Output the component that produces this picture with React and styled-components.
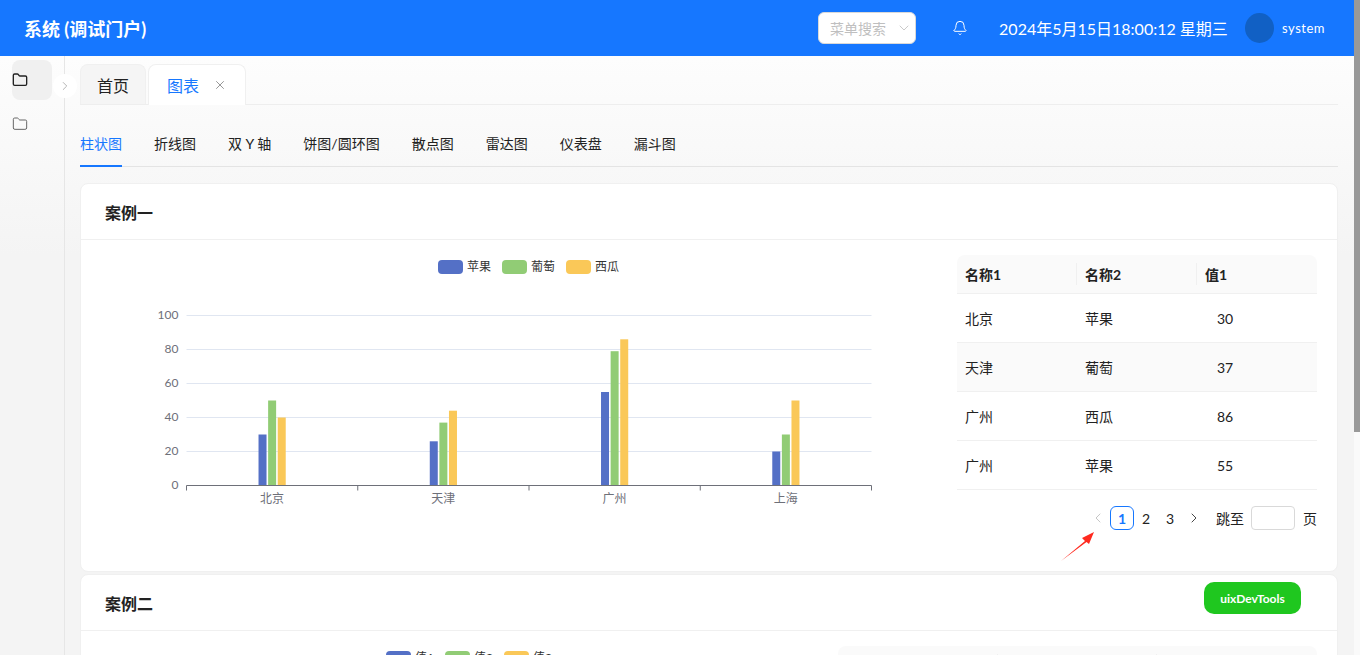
import React from "react";
import styled, { createGlobalStyle } from "styled-components";
import { Bell, ChevronDown, ChevronLeft, ChevronRight, Folder, X } from "lucide-react";

const Global = createGlobalStyle`
  html, body { margin: 0; padding: 0; height: 100%; overflow: hidden; }
  body { font-family: Lato, "Noto Sans CJK SC", sans-serif; color: #222; font-size: 14px; }
  * { box-sizing: border-box; }
`;

const Page = styled.div`
  position: relative;
  width: 1360px;
  height: 655px;
  overflow: hidden;
  padding-right: 6px;
  background: #fafafa;
`;
const TopBar = styled.header`
  height: 56px;
  background: #1677ff;
  color: #fff;
  display: flex;
  align-items: center;
  padding: 0 29px 0 24px;
`;
const Brand = styled.div`
  font-size: 18px;
  font-weight: 700;
  flex: 1;
`;
const SearchBox = styled.div`
  width: 98px;
  height: 32px;
  border-radius: 6px;
  background: #fff;
  border: 1px solid #d9d9d9;
  display: flex;
  align-items: center;
  justify-content: space-between;
  padding: 0 3px 0 11px;
  color: #bfbfbf;
  font-size: 14px;
`;
const BellWrap = styled.div`
  margin-left: 36px;
  width: 16px;
  height: 16px;
  display: flex;
`;
const Clock = styled.div`
  margin-left: 31px;
  font-size: 16px;
  width: 224px;
  white-space: nowrap;
`;
const Avatar = styled.div`
  margin-left: 22px;
  width: 29px;
  height: 30px;
  border-radius: 50%;
  background: #1160c4;
`;
const UserName = styled.div`
  margin-left: 8px;
  font-size: 13px;
  letter-spacing: 0.5px;
`;
const Body = styled.div`
  display: flex;
  height: 599px;
  background: linear-gradient(#fdfdfd 0, #f4f4f4 200px);
`;
const Side = styled.aside`
  position: relative;
  width: 65px;
  flex: none;
  border-right: 1px solid #e6e6e6;
  padding: 4px 12px;
  display: flex;
  flex-direction: column;
  gap: 4px;
`;
const SideItem = styled.div`
  width: 40px;
  height: 40px;
  border-radius: 8px;
  display: flex;
  align-items: center;
  padding-left: 0;
  background: ${(p) => (p.$active ? "#f0f0f0" : "transparent")};
  color: ${(p) => (p.$active ? "#222" : "#666")};
`;
const Collapse = styled.div`
  position: absolute;
  left: 53px;
  top: 18px;
  width: 24px;
  height: 24px;
  border-radius: 50%;
  background: #fff;
  color: #aaa;
  display: flex;
  align-items: center;
  justify-content: center;
`;
const Main = styled.main`
  flex: 1;
  min-width: 0;
  overflow: hidden;
  padding: 8px 16px 0 15px;
`;
const TabBar = styled.div`
  height: 41px;
  display: flex;
  gap: 2px;
  border-bottom: 1px solid #eeeeee;
`;
const PageTab = styled.div`
  height: ${(p) => (p.$active ? "41px" : "40px")};
  padding: 0 ${(p) => (p.$active ? "18px" : "16px")};
  display: flex;
  align-items: center;
  gap: 14px;
  font-size: 16px;
  border: 1px solid #f0f0f0;
  border-bottom: 0;
  border-radius: 8px 8px 0 0;
  background: ${(p) => (p.$active ? "#fff" : "#f5f5f5")};
  color: ${(p) => (p.$active ? "#1677ff" : "#222")};
  svg { color: #888; }
`;
const SubTabs = styled.nav`
  margin-top: 19px;
  height: 43px;
  display: flex;
  gap: 32px;
  border-bottom: 1px solid #e4e4e4;
`;
const SubTab = styled.div`
  height: 43px;
  padding-top: 10px;
  line-height: 20px;
  font-size: 14px;
  white-space: nowrap;
  color: ${(p) => (p.$active ? "#1677ff" : "#222")};
  border-bottom: 2px solid ${(p) => (p.$active ? "#1677ff" : "transparent")};
`;
const Card = styled.section`
  margin-top: ${(p) => p.$mt}px;
  background: #fff;
  border: 1px solid #f0f0f0;
  border-radius: 8px;
`;
const CardHead = styled.div`
  height: 56px;
  padding: 0 24px;
  display: flex;
  align-items: center;
  font-size: 16px;
  font-weight: 600;
  border-bottom: 1px solid #f0f0f0;
`;
const CardBody = styled.div`
  display: flex;
  gap: 20px;
  padding: 15px 20px 41px;
`;
const ChartPane = styled.div`
  flex: 1;
  min-width: 0;
`;
const TablePane = styled.div`
  width: ${(p) => p.$w}px;
  flex: none;
`;
const Table = styled.table`
  width: 100%;
  border-collapse: separate;
  border-spacing: 0;
  table-layout: fixed;
  font-size: 14px;
`;
const Th = styled.th`
  position: relative;
  height: 39px;
  padding: 0 8px;
  text-align: left;
  font-weight: 700;
  background: #fafafa;
  border-bottom: 1px solid #f0f0f0;
  &:first-child { border-top-left-radius: 8px; }
  &:last-child { border-top-right-radius: 8px; }
  &:not(:last-child)::after {
    content: "";
    position: absolute;
    right: 0;
    top: 8px;
    height: 22px;
    width: 1px;
    background: #f0f0f0;
  }
`;
const Tr = styled.tr`
  background: ${(p) => (p.$odd ? "#fafafa" : "#fff")};
`;
const Td = styled.td`
  height: 49px;
  padding: 0 8px;
  border-bottom: 1px solid #f0f0f0;
`;
const NumTd = styled(Td)`
  padding-left: 20px;
`;
const Pager = styled.div`
  margin-top: 16px;
  display: flex;
  justify-content: flex-end;
  align-items: center;
  height: 24px;
  font-size: 14px;
`;
const PageBtn = styled.div`
  width: 24px;
  height: 24px;
  border-radius: 6px;
  display: flex;
  align-items: center;
  justify-content: center;
  border: 1px solid ${(p) => (p.$active ? "#1677ff" : "transparent")};
  color: ${(p) => (p.$active ? "#1677ff" : p.$dim ? "#bbb" : "#222")};
  font-weight: ${(p) => (p.$active ? 700 : 400)};
`;
const JumpLabel = styled.span`
  margin-left: 10px;
`;
const JumpInput = styled.div`
  width: 44px;
  height: 24px;
  margin: 0 8px 0 7px;
  border: 1px solid #d9d9d9;
  border-radius: 4px;
  background: #fff;
`;
const Scrollbar = styled.div`
  position: absolute;
  right: 0;
  top: 0;
  width: 6px;
  height: 432px;
  background: #999;
`;
const DevTools = styled.div`
  position: absolute;
  left: 1204px;
  top: 582px;
  width: 97px;
  height: 32px;
  border-radius: 10px;
  background: #1fc71f;
  color: #fff;
  font-size: 12px;
  font-weight: 700;
  display: flex;
  align-items: center;
  justify-content: center;
`;
const Arrow = styled.svg`
  position: absolute;
  left: 1060px;
  top: 530px;
`;

const COLORS = ["#5470c6", "#91cc75", "#fac858"];

function Chart({ width, height, legend, legendX, legendStep, cats, series, gridLeft, gridRight }) {
  const top = 60.5;
  const unit = 1.7;
  const base = top + 170;
  const gridW = gridRight - gridLeft;
  const band = gridW / cats.length;
  return (
    <svg width={width} height={height} style={{ display: "block" }} fontFamily='Lato, "Noto Sans CJK SC", sans-serif'>
      {legend.map((name, i) => (
        <g key={name}>
          <rect x={legendX + i * legendStep} y={5} width={25} height={14} rx={4} fill={COLORS[i]} />
          <text x={legendX + i * legendStep + 29} y={16} fontSize={12} fill="#333">{name}</text>
        </g>
      ))}
      {[0, 20, 40, 60, 80, 100].map((v) => (
        <g key={v}>
          {v > 0 && <line x1={gridLeft} x2={gridRight} y1={base - v * unit} y2={base - v * unit} stroke="#e0e6f1" />}
          <text x={gridLeft - 8} y={base - v * unit + 3.5} textAnchor="end" fontSize={12} fill="#6e7079">{v}</text>
        </g>
      ))}
      {cats.map((c, i) => (
        <g key={c}>
          <text x={gridLeft + band * (i + 0.5)} y={base + 17} textAnchor="middle" fontSize={12} fill="#6e7079">{c}</text>
          {series.map((s, j) => (
            <rect
              key={j}
              x={gridLeft + band * (i + 0.5) + (j - 1) * 9.6 - 4}
              y={base - s[i] * unit}
              width={8}
              height={s[i] * unit}
              fill={COLORS[j]}
            />
          ))}
        </g>
      ))}
      <line x1={gridLeft} x2={gridRight} y1={base} y2={base} stroke="#6e7079" />
      {cats.concat("").map((c, i) => (
        <line key={i} x1={gridLeft + band * i} x2={gridLeft + band * i} y1={base} y2={base + 5} stroke="#6e7079" />
      ))}
    </svg>
  );
}

const ROWS = [
  ["北京", "苹果", 30],
  ["天津", "葡萄", 37],
  ["广州", "西瓜", 86],
  ["广州", "苹果", 55],
];
const CATS = ["北京", "天津", "广州", "上海"];
const SERIES = [
  [30, 26, 55, 20],
  [50, 37, 79, 30],
  [40, 44, 86, 50],
];

function DataTable({ headers }) {
  return (
    <Table>
      <thead>
        <tr>{headers.map((h) => <Th key={h}>{h}</Th>)}</tr>
      </thead>
      <tbody>
        {ROWS.map((r, i) => (
          <Tr key={i} $odd={i === 1}>
            <Td>{r[0]}</Td>
            <Td>{r[1]}</Td>
            <NumTd>{r[2]}</NumTd>
          </Tr>
        ))}
      </tbody>
    </Table>
  );
}

export default function App() {
  return (
    <Page>
      <Global />
      <TopBar>
        <Brand>系统 (调试门户)</Brand>
        <SearchBox>
          菜单搜索
          <ChevronDown size={16} strokeWidth={1.25} color="#bfbfbf" />
        </SearchBox>
        <BellWrap><Bell size={16} strokeWidth={1.5} /></BellWrap>
        <Clock>2024年5月15日18:00:12 星期三</Clock>
        <Avatar />
        <UserName>system</UserName>
      </TopBar>
      <Body>
        <Side>
          <SideItem $active><Folder size={16} strokeWidth={2} /></SideItem>
          <SideItem><Folder size={16} strokeWidth={1.5} /></SideItem>
          <Collapse><ChevronRight size={14} strokeWidth={1.5} /></Collapse>
        </Side>
        <Main>
          <TabBar>
            <PageTab>首页</PageTab>
            <PageTab $active>图表<X size={14} strokeWidth={1.5} /></PageTab>
          </TabBar>
          <SubTabs>
            <SubTab $active>柱状图</SubTab>
            <SubTab>折线图</SubTab>
            <SubTab>双 Y 轴</SubTab>
            <SubTab>饼图/圆环图</SubTab>
            <SubTab>散点图</SubTab>
            <SubTab>雷达图</SubTab>
            <SubTab>仪表盘</SubTab>
            <SubTab>漏斗图</SubTab>
          </SubTabs>
          <Card $mt={16}>
            <CardHead>案例一</CardHead>
            <CardBody>
              <ChartPane>
                <Chart width={836} height={270} legend={["苹果", "葡萄", "西瓜"]} legendX={337} legendStep={64} cats={CATS} series={SERIES} gridLeft={85.5} gridRight={770.5} />
              </ChartPane>
              <TablePane $w={360}>
                <DataTable headers={["名称1", "名称2", "值1"]} />
                <Pager>
                  <PageBtn $dim><ChevronLeft size={16} strokeWidth={1.25} /></PageBtn>
                  <PageBtn $active>1</PageBtn>
                  <PageBtn>2</PageBtn>
                  <PageBtn>3</PageBtn>
                  <PageBtn><ChevronRight size={16} strokeWidth={1.25} /></PageBtn>
                  <JumpLabel>跳至</JumpLabel>
                  <JumpInput />
                  <span>页</span>
                </Pager>
              </TablePane>
            </CardBody>
          </Card>
          <Card $mt={2}>
            <CardHead>案例二</CardHead>
            <CardBody>
              <ChartPane>
                <Chart width={717} height={270} legend={["值1", "值2", "值3"]} legendX={285} legendStep={59} cats={CATS} series={SERIES} gridLeft={85.5} gridRight={690} />
              </ChartPane>
              <TablePane $w={479}>
                <DataTable headers={["名称1", "名称2", "值1"]} />
              </TablePane>
            </CardBody>
          </Card>
        </Main>
      </Body>
      <Scrollbar />
      <DevTools>uixDevTools</DevTools>
      <Arrow width="40" height="34" viewBox="0 0 40 34">
        <path d="M1 31 L25 11 L22 8 L34 2 L29 14 L26.5 12 Z" fill="#ff2a1f" />
      </Arrow>
    </Page>
  );
}
